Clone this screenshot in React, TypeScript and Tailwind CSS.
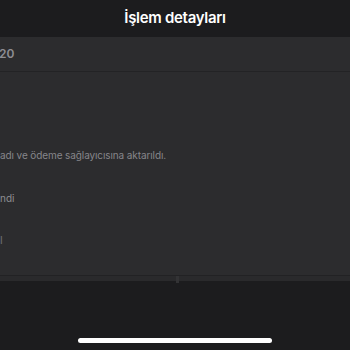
import React from "react";

export default function App() {
  const font = { fontFamily: "Inter, 'Noto Sans', sans-serif" };
  return (
    <div className="w-[350px] h-[350px] overflow-hidden bg-[#1c1c1e] flex flex-col" style={font}>
      <div className="h-[37px] shrink-0 flex items-center justify-center bg-[#1c1c1e]">
        <span className="text-[15px] font-semibold text-white tracking-[-0.3px]">İşlem detayları</span>
      </div>
      <div className="h-[35px] shrink-0 bg-[#2c2c2e] flex items-center border-b border-[#232325]">
        <span className="text-[12px] font-semibold text-[#8e8e93] ml-[-1px]">20</span>
      </div>
      <div className="h-[203px] shrink-0 bg-[#2c2c2e] flex flex-col">
        <div className="mt-[76px] text-[10px] text-[#86868b] leading-[14px] whitespace-nowrap tracking-[-0.1px]">adı ve ödeme sağlayıcısına aktarıldı.</div>
        <div className="mt-[29px] text-[10px] text-[#8e8e93] leading-[14px] whitespace-nowrap">ndi</div>
        <div className="mt-[28px] text-[11px] text-[#6e6e73] leading-[14px] whitespace-nowrap">l</div>
      </div>
      <div className="h-[1px] shrink-0 bg-[#222224]" />
      <div className="h-[5px] shrink-0 bg-[#2a2a2c] relative">
        <div className="absolute left-[176px] top-0 w-[3px] h-[7px] bg-[#333335]" />
      </div>
      <div className="flex-1 flex flex-col justify-end items-center pb-[7px]">
        <div className="w-[194px] h-[5px] rounded-full bg-white" />
      </div>
    </div>
  );
}
